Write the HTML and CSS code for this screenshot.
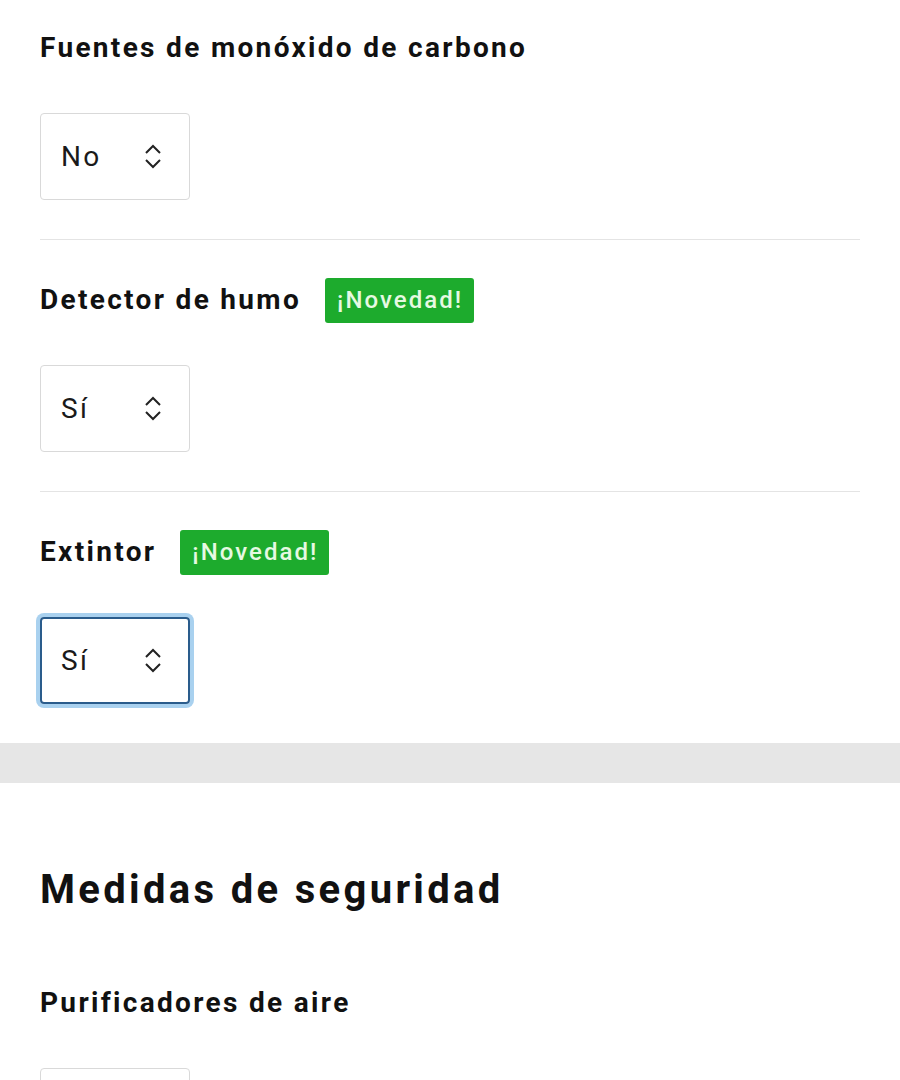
FILE: index.html
```html
<!DOCTYPE html>
<html lang="es">
<head>
    <meta charset="UTF-8">
    <meta name="viewport" content="width=device-width, initial-scale=1.0">
    <title>Seguridad</title>
    <link rel="stylesheet" href="styles.css">
</head>
<body>
<div class="group">
    <div class="field">
        <div class="label-row"><span class="label">Fuentes de monóxido de carbono</span></div>
        <div class="select">
            <span>No</span>
            <svg class="chevrons" viewBox="0 0 18 27"><path d="M2 10 L9 3 L16 10 M2 17 L9 24 L16 17"/></svg>
        </div>
    </div>
    <div class="field">
        <div class="label-row"><span class="label">Detector de humo</span><span class="badge">¡Novedad!</span></div>
        <div class="select">
            <span>Sí</span>
            <svg class="chevrons" viewBox="0 0 18 27"><path d="M2 10 L9 3 L16 10 M2 17 L9 24 L16 17"/></svg>
        </div>
    </div>
    <div class="field">
        <div class="label-row"><span class="label">Extintor</span><span class="badge">¡Novedad!</span></div>
        <div class="select focused">
            <span>Sí</span>
            <svg class="chevrons" viewBox="0 0 18 27"><path d="M2 10 L9 3 L16 10 M2 17 L9 24 L16 17"/></svg>
        </div>
    </div>
</div>

<div class="band"></div>

<div class="group next">
    <h2 class="section-title">Medidas de seguridad</h2>
    <div class="field">
        <div class="label-row"><span class="label">Purificadores de aire</span></div>
        <div class="select">
            <span>No</span>
            <svg class="chevrons" viewBox="0 0 18 27"><path d="M2 10 L9 3 L16 10 M2 17 L9 24 L16 17"/></svg>
        </div>
    </div>
</div>
</body>
</html>
```

FILE: styles.css
```css
body {
    margin: 0;
    background: #fff;
    color: #111;
    font-family: Roboto, "Liberation Sans", Arial, sans-serif;
}

.group {
    padding: 0 40px;
}

.field {
    padding: 37px 0 39px;
    border-top: 1px solid #e4e4e4;
}

.group > .field:first-child {
    padding-top: 25px;
    border-top: none;
}

.next {
    padding-top: 83px;
}

.next .field {
    border-top: none;
    padding-top: 37px;
}

.section-title {
    margin: 0 0 29px;
    font-size: 40px;
    line-height: 48px;
    font-weight: 700;
    letter-spacing: 0.083em;
}

.label-row {
    display: flex;
    align-items: center;
    height: 46px;
    gap: 24px;
    margin-bottom: 42px;
}

.label {
    font-size: 28px;
    font-weight: 700;
    line-height: 34px;
    letter-spacing: 0.083em;
}

.badge {
    display: flex;
    align-items: center;
    height: 45px;
    padding: 0 11px 0 12px;
    border-radius: 3px;
    background: #1dab2d;
    color: #e6f9e2;
    font-size: 24px;
    font-weight: 500;
    letter-spacing: 0.085em;
}

.select {
    display: flex;
    align-items: center;
    justify-content: space-between;
    box-sizing: border-box;
    width: 150px;
    height: 87px;
    padding: 0 27px 0 20px;
    border: 1px solid #d9d9d9;
    border-radius: 4px;
    font-size: 28px;
    letter-spacing: 0.083em;
    color: #1a1a1a;
}

.select.focused {
    border: 2px solid #2a5c8c;
    padding: 0 26px 0 19px;
    box-shadow: 0 0 0 4px #a9d1ef;
}

.chevrons {
    width: 18px;
    height: 27px;
    fill: none;
    stroke: #222;
    stroke-width: 2;
}

.band {
    height: 40px;
    background: #e6e6e6;
}
```
